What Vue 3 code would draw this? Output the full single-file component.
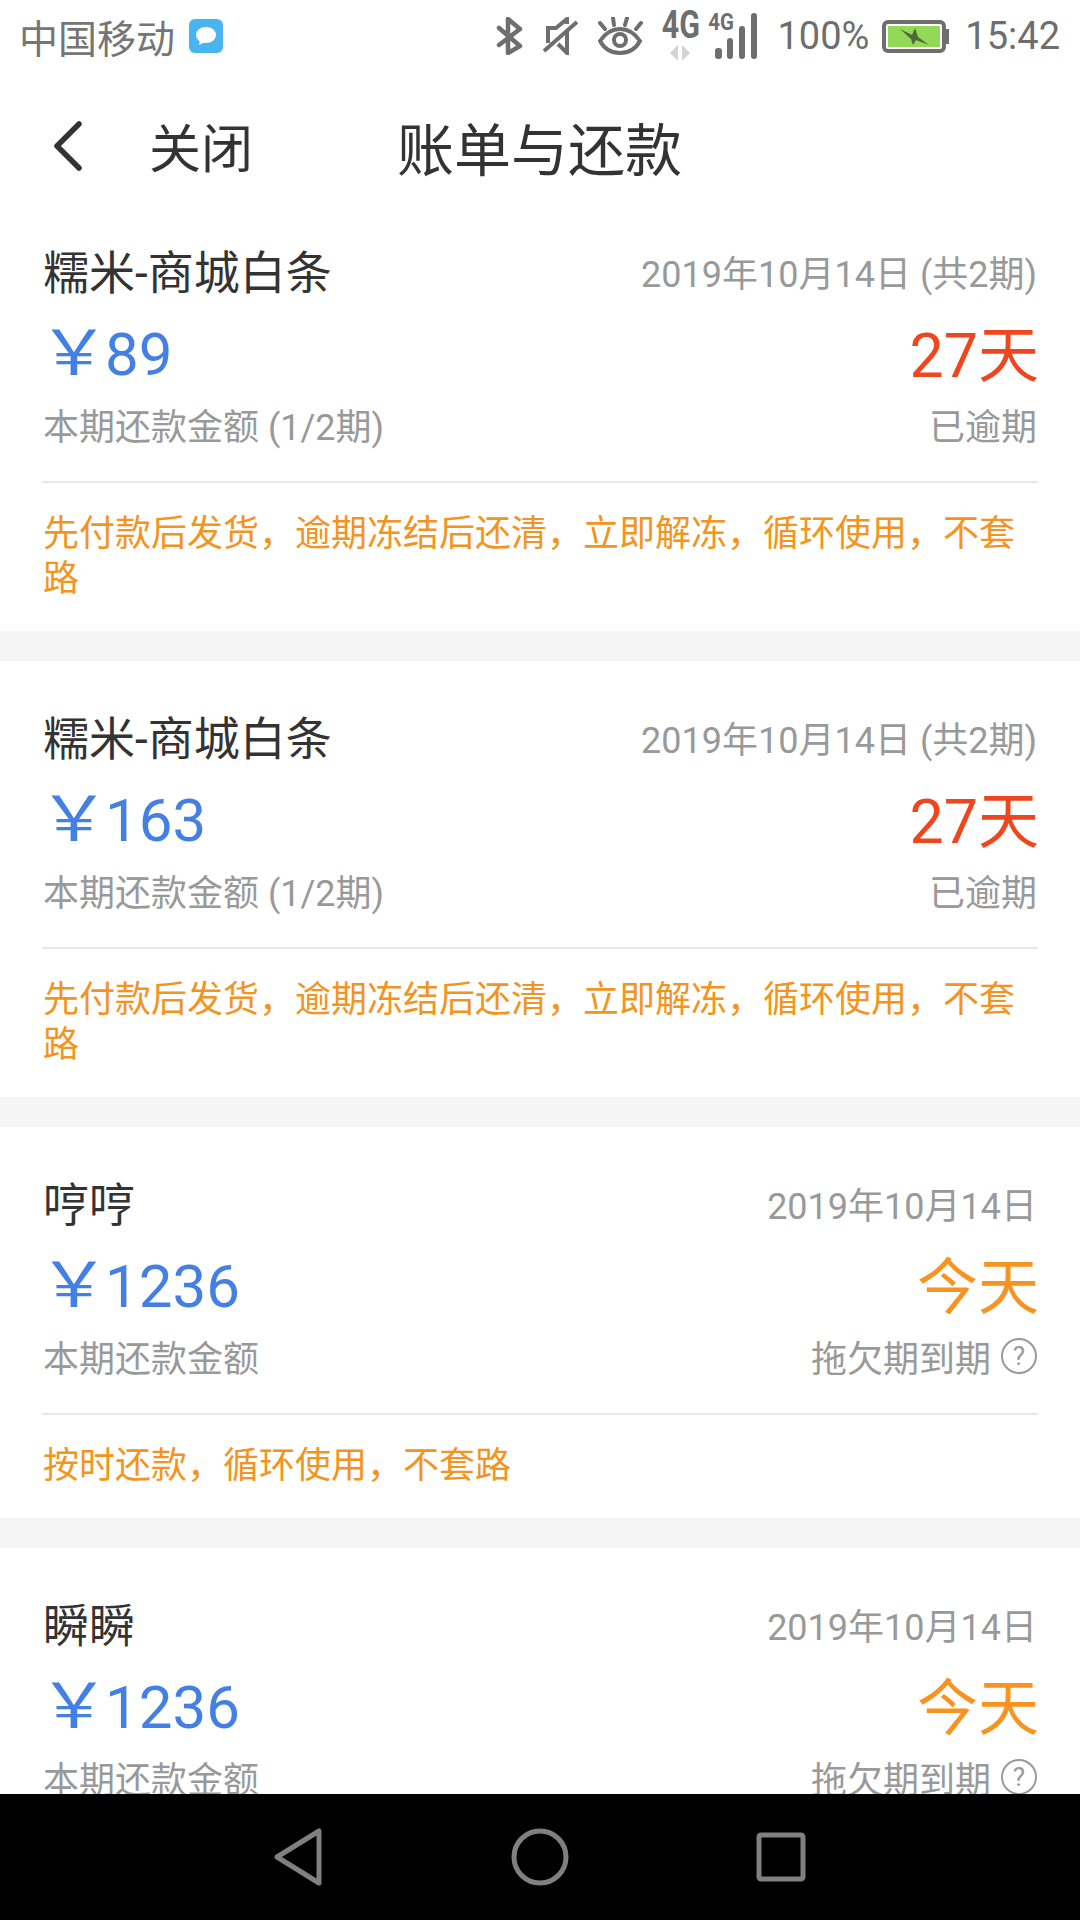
<script setup>
const promoLong = '先付款后发货，逾期冻结后还清，立即解冻，循环使用，不套路'
const promoShort = '按时还款，循环使用，不套路'

const bills = [
  { name: '糯米-商城白条', date: '2019年10月14日 (共2期)', amount: '89', due: '27天', overdue: true, label: '本期还款金额 (1/2期)', status: '已逾期', promo: promoLong },
  { name: '糯米-商城白条', date: '2019年10月14日 (共2期)', amount: '163', due: '27天', overdue: true, label: '本期还款金额 (1/2期)', status: '已逾期', promo: promoLong },
  { name: '哼哼', date: '2019年10月14日', amount: '1236', due: '今天', overdue: false, label: '本期还款金额', status: '拖欠期到期', promo: promoShort },
  { name: '瞬瞬', date: '2019年10月14日', amount: '1236', due: '今天', overdue: false, label: '本期还款金额', status: '拖欠期到期', promo: promoShort }
]
</script>

<template>
  <div class="screen">
    <div class="status-bar">
      <span class="carrier">中国移动</span>
      <svg class="msg-icon" width="34" height="34" viewBox="0 0 34 34">
        <rect width="34" height="34" rx="6" fill="#4ab4f0" />
        <ellipse cx="17" cy="16" rx="10" ry="8" fill="#fff" />
        <path d="M11 21l-1 5 6-3z" fill="#fff" />
      </svg>
      <div class="status-right">
        <svg width="28" height="38" viewBox="0 0 28 38" fill="none" stroke="#6e6e6e" stroke-width="4.5" stroke-linejoin="round" stroke-linecap="round">
          <path d="M3 11l21 18-12 7V2l12 10L3 28" />
        </svg>
        <svg class="ml-mute" width="36" height="38" viewBox="0 0 36 38" fill="none" stroke="#6e6e6e" stroke-width="4">
          <path d="M25 14V36l-9-9M6 26V11h8L25 2v5" />
          <path d="M2 34L35 5" />
        </svg>
        <svg class="ml-eye" width="46" height="38" viewBox="0 0 46 38" fill="none" stroke="#6e6e6e" stroke-width="4" stroke-linecap="round">
          <path d="M2 24C8 15 15 12 22 12s14 3 20 12c-5 9-12 12-20 12S7 33 2 24z" />
          <circle cx="22" cy="23" r="6" />
          <path d="M2 6l5 6M15 1l1 7M29 1l-2 7M43 6l-5 6" />
        </svg>
        <div class="net-big ml-4g">
          <span>4G</span>
          <svg width="22" height="18" viewBox="0 0 22 18">
            <path d="M9 1v16L1 9zM13 1v16l8-8z" fill="#d4d4d4" />
          </svg>
        </div>
        <div class="net-signal ml-signal">
          <span>4G</span>
          <svg width="50" height="48" viewBox="0 0 50 48">
            <rect x="6" y="36" width="7" height="11" rx="3" fill="#6e6e6e" />
            <rect x="18" y="26" width="6" height="21" rx="3" fill="#6e6e6e" />
            <rect x="30" y="14" width="6" height="33" rx="3" fill="#6e6e6e" />
            <rect x="42" y="1" width="6" height="46" rx="3" fill="#6e6e6e" />
          </svg>
        </div>
        <span class="status-text ml-pct">100%</span>
        <svg class="ml-batt" width="67" height="33" viewBox="0 0 67 33">
          <rect x="2" y="2" width="60" height="29" rx="4" fill="#fff" stroke="#6e6e6e" stroke-width="4" />
          <rect x="6" y="6" width="52" height="21" fill="#93d957" />
          <rect x="64" y="9" width="3" height="15" fill="#6e6e6e" />
          <path d="M18 9l12 6 3-7 3 9 11 8-13-5-3 5-2-6z" fill="#4c6b34" />
        </svg>
        <span class="status-text ml-time">15:42</span>
      </div>
    </div>

    <div class="header">
      <svg class="back" width="30" height="50" viewBox="0 0 30 50" fill="none" stroke="#333" stroke-width="5.5" stroke-linecap="round" stroke-linejoin="round">
        <path d="M26 3L4 25l22 22" />
      </svg>
      <span class="close">关闭</span>
      <span class="title">账单与还款</span>
    </div>

    <div class="list">
      <div v-for="(bill, i) in bills" :key="i" class="card">
        <div class="row row-top">
          <span class="name">{{ bill.name }}</span>
          <span class="date">{{ bill.date }}</span>
        </div>
        <div class="row row-mid">
          <span class="amount"><span class="yen">￥</span>{{ bill.amount }}</span>
          <span class="due" :class="{ overdue: bill.overdue }">{{ bill.due }}</span>
        </div>
        <div class="row row-sub">
          <span>{{ bill.label }}</span>
          <span class="status">
            {{ bill.status }}
            <i v-if="!bill.overdue" class="help">?</i>
          </span>
        </div>
        <div class="divider"></div>
        <div class="promo">{{ bill.promo }}</div>
      </div>
    </div>

    <div class="nav-bar">
      <svg width="50" height="58" viewBox="0 0 50 58" fill="none" stroke="#808080" stroke-width="5" stroke-linejoin="round">
        <path d="M45 3v52L3 29z" />
      </svg>
      <svg width="58" height="58" viewBox="0 0 58 58" fill="none" stroke="#808080" stroke-width="5">
        <circle cx="29" cy="29" r="26" />
      </svg>
      <svg width="50" height="50" viewBox="0 0 50 50" fill="none" stroke="#808080" stroke-width="5" stroke-linejoin="round">
        <rect x="3" y="3" width="44" height="44" rx="2" />
      </svg>
    </div>
  </div>
</template>

<style scoped>
.screen {
  width: 1080px;
  height: 1920px;
  display: flex;
  flex-direction: column;
  overflow: hidden;
  background: #fff;
  font-family: Roboto, "Noto Sans CJK SC", sans-serif;
}

.status-bar {
  height: 75px;
  box-sizing: border-box;
  flex: none;
  display: flex;
  align-items: center;
  padding: 0 20px 3px 19px;
  color: #757575;
}

.carrier {
  font-size: 39px;
}

.msg-icon {
  margin-left: 14px;
}

.status-right {
  margin-left: auto;
  display: flex;
  align-items: center;
}

.net-big {
  width: 38px;
  display: flex;
  flex-direction: column;
  align-items: center;
  gap: 4px;
}

.net-big span {
  font-size: 38px;
  line-height: 30px;
  font-weight: 700;
  color: #6e6e6e;
  transform: scaleX(0.8);
}

.net-signal {
  position: relative;
  width: 50px;
  height: 48px;
}

.net-signal svg {
  display: block;
}

.net-signal span {
  position: absolute;
  left: -3px;
  top: 0;
  font-size: 24px;
  line-height: 20px;
  font-weight: 700;
  color: #6e6e6e;
  transform: scaleX(0.85);
}

.status-text {
  font-size: 38px;
  color: #6e6e6e;
}

.ml-mute { margin-left: 18px; }
.ml-eye { margin-left: 20px; }
.ml-4g { margin-left: 17px; }
.ml-signal { margin-left: 10px; }
.ml-pct { margin-left: 18px; }
.ml-batt { margin-left: 13px; }
.ml-time { margin-left: 16px; }

.header {
  height: 120px;
  box-sizing: border-box;
  flex: none;
  display: flex;
  align-items: center;
  padding: 21px 0 0 53px;
  color: #333;
}

.close {
  font-size: 52px;
  margin-left: 66px;
}

.title {
  font-size: 57px;
  margin-left: 144px;
}

.list {
  flex: 1;
  min-height: 0;
  overflow: hidden;
  background: #f5f5f5;
}

.card {
  background: #fff;
  padding: 46px 42px 29px;
  margin-bottom: 30px;
}

.row {
  display: flex;
  justify-content: space-between;
  align-items: center;
  padding: 0 1px;
}

.row-top {
  height: 56px;
}

.name {
  font-size: 46px;
  color: #333;
}

.date {
  font-size: 36px;
  padding-top: 4px;
  color: #999;
}

.row-mid {
  height: 108px;
}

.amount {
  font-size: 60px;
  line-height: 70px;
  padding-top: 8px;
  color: #4480e4;
}

.yen {
  display: inline-block;
  font-size: 62px;
  line-height: 60px;
  transform: scaleX(1.15);
}

.due {
  font-size: 61px;
  padding-bottom: 2px;
  margin-right: -2px;
  color: #f7931e;
}

.due.overdue {
  color: #f0461e;
}

.row-sub {
  height: 38px;
  font-size: 36px;
  color: #999;
}

.status {
  display: flex;
  align-items: center;
  gap: 10px;
}

.help {
  width: 36px;
  height: 36px;
  box-sizing: border-box;
  border: 2px solid #999;
  border-radius: 50%;
  display: flex;
  align-items: center;
  justify-content: center;
  font-style: normal;
  font-size: 26px;
}

.divider {
  margin-top: 38px;
  height: 2px;
  background: #e8e8e8;
}

.promo {
  padding: 29px 0 0 1px;
  font-size: 36px;
  line-height: 45px;
  color: #f39420;
}

.nav-bar {
  height: 126px;
  flex: none;
  background: #000;
  display: flex;
  align-items: center;
  justify-content: center;
  gap: 187px;
}
</style>

<style>
html,
body {
  margin: 0;
}
</style>
